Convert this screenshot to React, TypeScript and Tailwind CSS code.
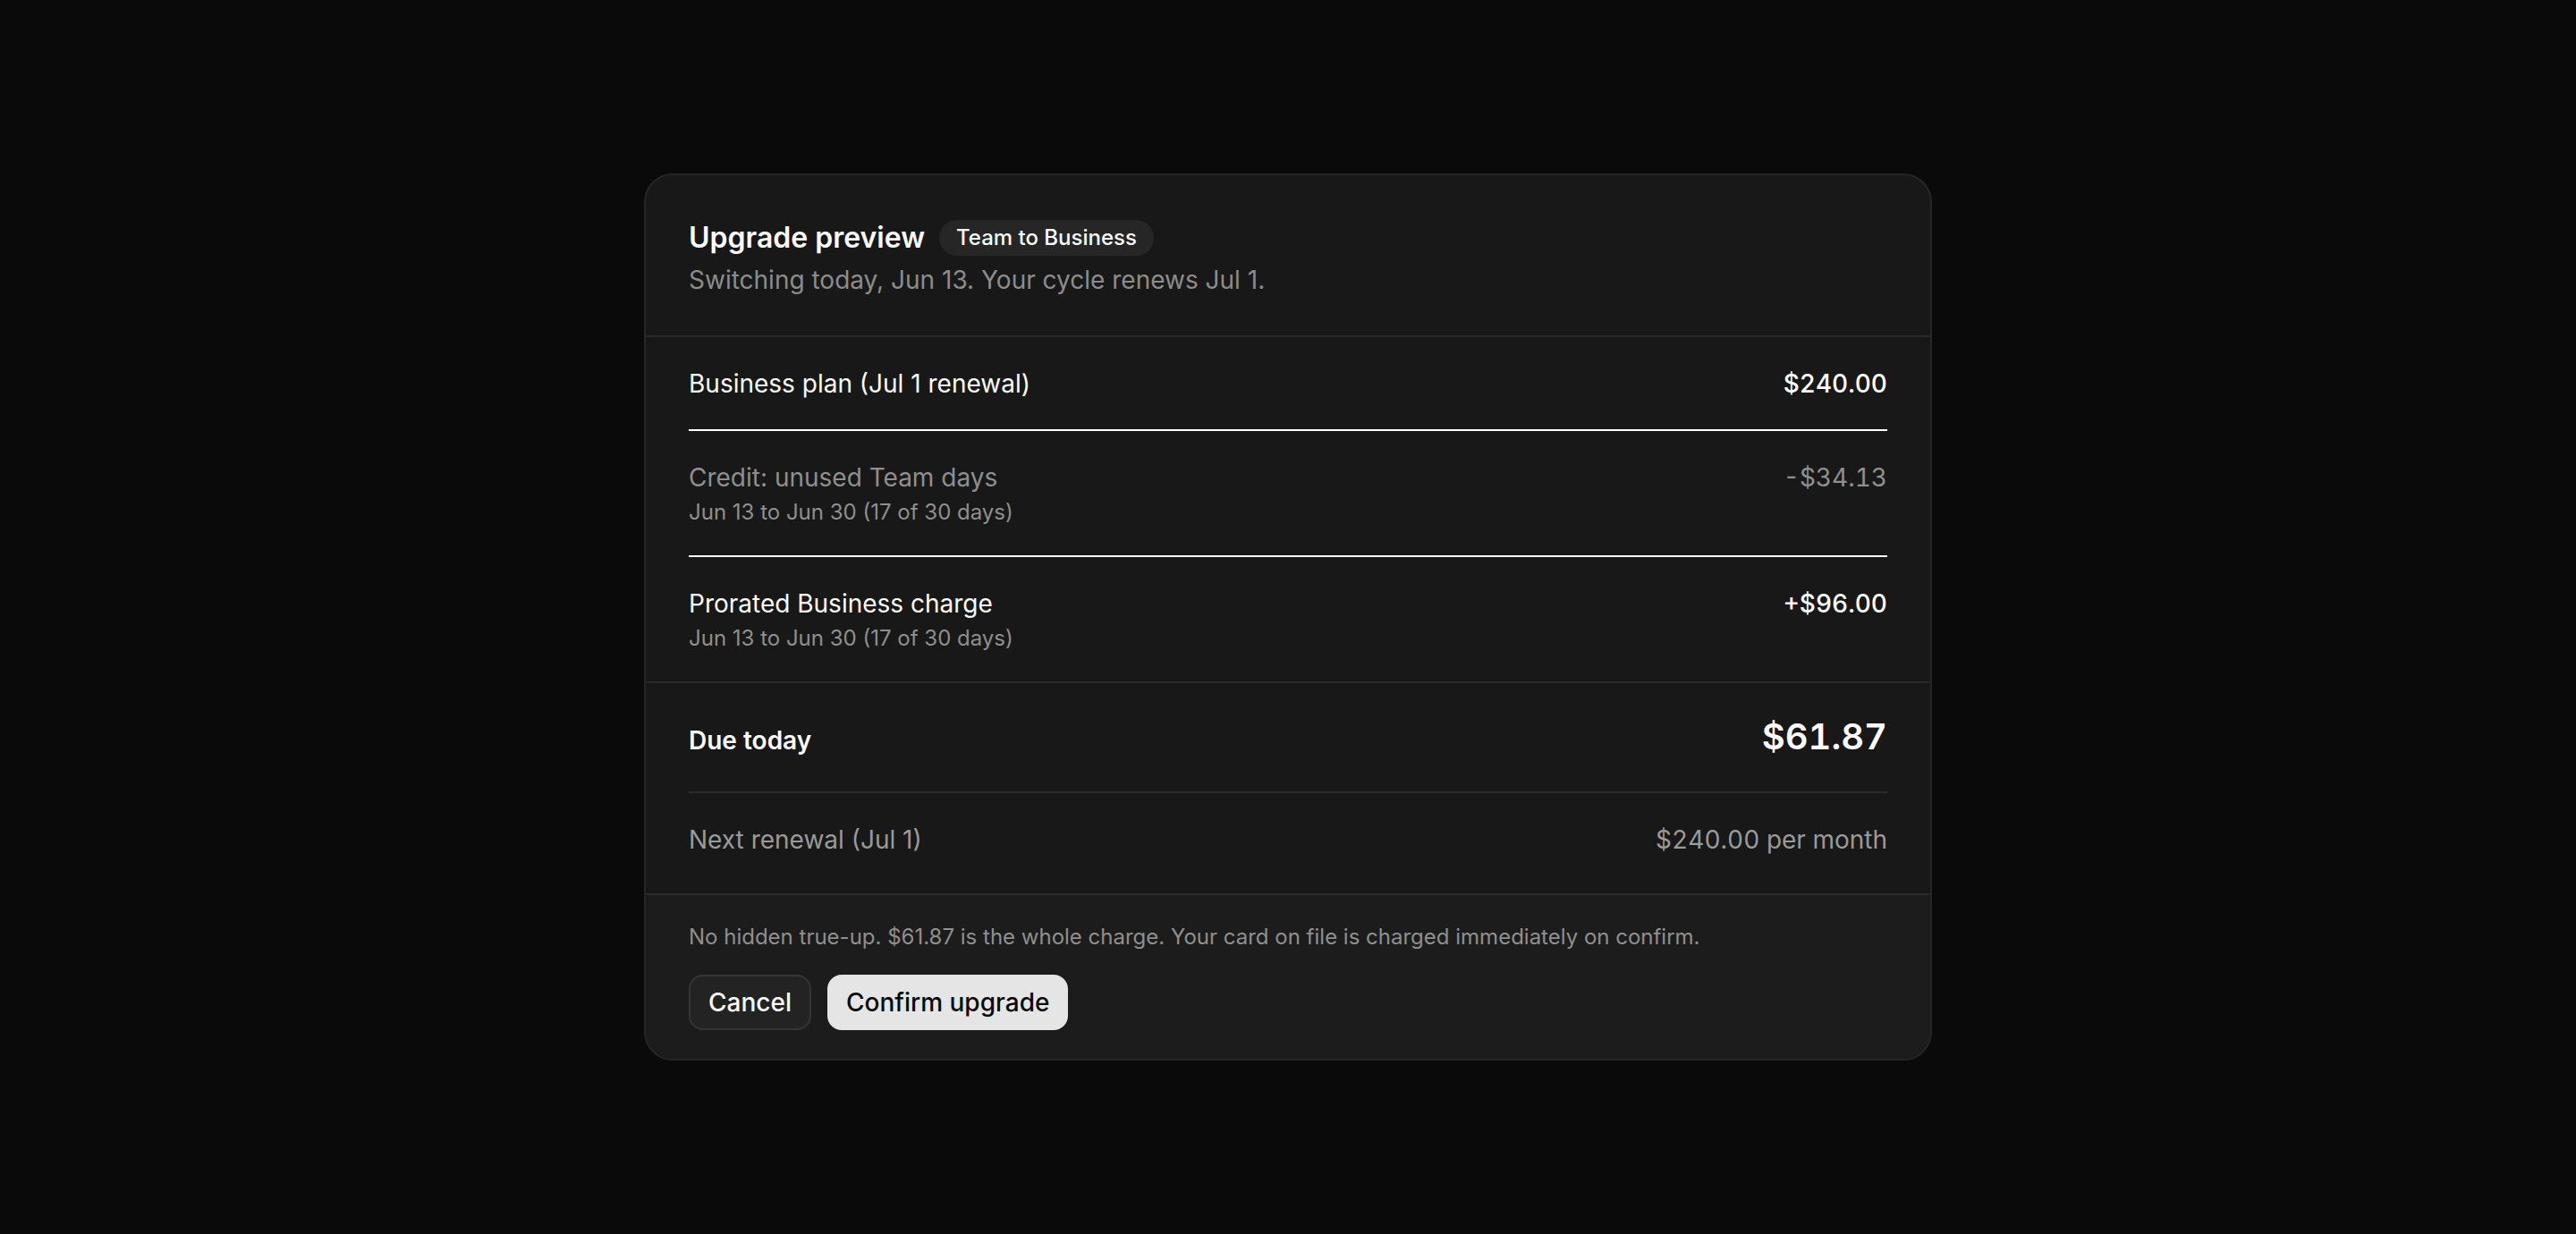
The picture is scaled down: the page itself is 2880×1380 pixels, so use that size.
type LineItem = {
  label: string
  sub?: string
  amount: string
  muted?: boolean
}

const items: LineItem[] = [
  { label: 'Business plan (Jul 1 renewal)', amount: '$240.00' },
  {
    label: 'Credit: unused Team days',
    sub: 'Jun 13 to Jun 30 (17 of 30 days)',
    amount: '-$34.13',
    muted: true,
  },
  {
    label: 'Prorated Business charge',
    sub: 'Jun 13 to Jun 30 (17 of 30 days)',
    amount: '+$96.00',
  },
]

function Row({ item, last }: { item: LineItem; last: boolean }) {
  return (
    <div
      className={`flex items-start justify-between pt-[31px] pb-[30px] ${
        last ? '' : 'border-b-2 border-white'
      }`}
    >
      <div className="flex flex-col">
        <span
          className={`text-[28px] leading-[42px] ${
            item.muted ? 'text-[#8f8f8f]' : 'text-[#fafafa]'
          }`}
        >
          {item.label}
        </span>
        {item.sub && (
          <span className="text-[24px] leading-[36px] text-[#8f8f8f]">{item.sub}</span>
        )}
      </div>
      <span
        className={`text-[28px] leading-[42px] tabular-nums ${
          item.muted ? 'text-[#8f8f8f]' : 'font-medium text-[#fafafa]'
        }`}
      >
        {item.amount}
      </span>
    </div>
  )
}

export default function App() {
  return (
    <div className="flex min-h-screen items-center justify-center bg-[#0a0a0a] font-['Inter','Noto_Sans',sans-serif] antialiased">
      <div className="w-[1440px] overflow-hidden rounded-[32px] border-2 border-[#262626] bg-[#181818]">
        {/* header */}
        <div className="border-b-2 border-[#2a2a2a] px-12 pt-[50px] pb-[41px]">
          <div className="flex items-center gap-4">
            <h2 className="text-[32px] leading-[40px] font-semibold text-[#fafafa]">
              Upgrade preview
            </h2>
            <span className="flex h-[40px] items-center rounded-full bg-[#262626] px-[19px] text-[24px] leading-[32px] font-medium text-[#fafafa]">
              Team to Business
            </span>
          </div>
          <p className="mt-[6px] text-[28px] leading-[42px] text-[#8c8c8c]">
            Switching today, Jun 13. Your cycle renews Jul 1.
          </p>
        </div>

        {/* line items */}
        <div className="border-b-2 border-[#2a2a2a] px-12">
          {items.map((item, i) => (
            <Row key={item.label} item={item} last={i === items.length - 1} />
          ))}
        </div>

        {/* totals */}
        <div className="border-b-2 border-[#2a2a2a] px-12">
          <div className="flex items-baseline justify-between border-b-2 border-[#2c2c2c] pt-[40px] pb-[36px]">
            <span className="text-[28px] leading-[42px] font-semibold text-[#fafafa]">Due today</span>
            <span className="text-[40px] leading-none font-semibold tabular-nums text-[#fafafa]">
              $61.87
            </span>
          </div>
          <div className="flex items-start justify-between pt-[31px] pb-[39px]">
            <span className="text-[28px] leading-[42px] text-[#9a9a9a]">Next renewal (Jul 1)</span>
            <span className="text-[28px] leading-[42px] tabular-nums text-[#9a9a9a]">
              $240.00 per month
            </span>
          </div>
        </div>

        {/* footer */}
        <div className="bg-[#1c1c1c] px-12 pt-[29px] pb-[32px]">
          <p className="text-[24px] leading-[36px] text-[#8f8f8f]">
            No hidden true-up. $61.87 is the whole charge. Your card on file is charged immediately on
            confirm.
          </p>
          <div className="mt-[24px] flex gap-[18px]">
            <button className="rounded-2xl border-2 border-[#353535] bg-[#232323] px-5 py-2 text-[28px] leading-[42px] font-medium text-[#fafafa]">
              Cancel
            </button>
            <button className="rounded-2xl border-2 border-[#e5e5e5] bg-[#e5e5e5] px-[19px] py-2 text-[28px] leading-[42px] font-medium text-[#0a0a0a]">
              Confirm upgrade
            </button>
          </div>
        </div>
      </div>
    </div>
  )
}
